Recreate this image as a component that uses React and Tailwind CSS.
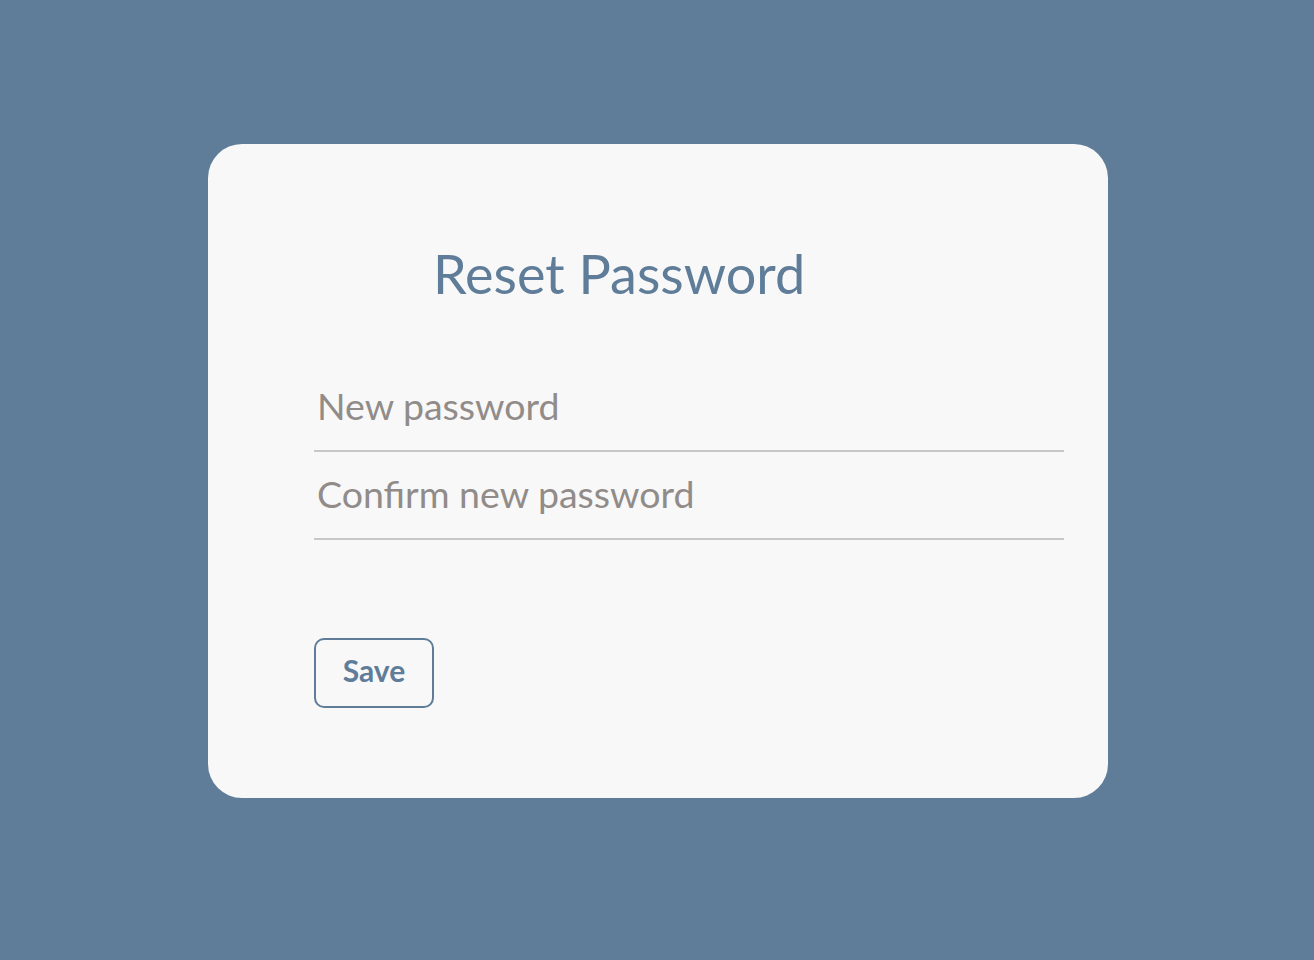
export default function App() {
  return (
    <div className="min-h-[960px] w-full bg-[#5f7d99] pl-[2px] pt-[144px]" style={{ fontFamily: "Lato, 'Open Sans', sans-serif" }}>
      <div className="mx-auto h-[654px] w-[900px] rounded-[34px] bg-[#f8f8f8]">
        <h1 className="pl-[225px] pt-[103px] text-[54px] leading-none font-normal text-[#5f7d99]">Reset Password</h1>
        <form className="ml-[106px] mt-[63px] w-[750px]" onSubmit={(e) => e.preventDefault()}>
          <input
            type="password"
            placeholder="New password"
            className="block h-[88px] w-full border-b-2 border-[#c8c8c8] bg-transparent pb-[3px] pl-[3px] text-[37.5px] text-[#555] placeholder:text-[#918c89] outline-none"
          />
          <input
            type="password"
            placeholder="Confirm new password"
            className="block h-[88px] w-full border-b-2 border-[#c8c8c8] bg-transparent pb-[3px] pl-[3px] text-[37.5px] text-[#555] placeholder:text-[#918c89] outline-none"
          />
          <button
            type="submit"
            className="mt-[98px] flex h-[70px] w-[120px] items-center justify-center rounded-[10px] border-2 border-[#5f7d99] bg-transparent pb-[5px] text-[30px] font-bold text-[#5f7d99]"
          >
            Save
          </button>
        </form>
      </div>
    </div>
  );
}
